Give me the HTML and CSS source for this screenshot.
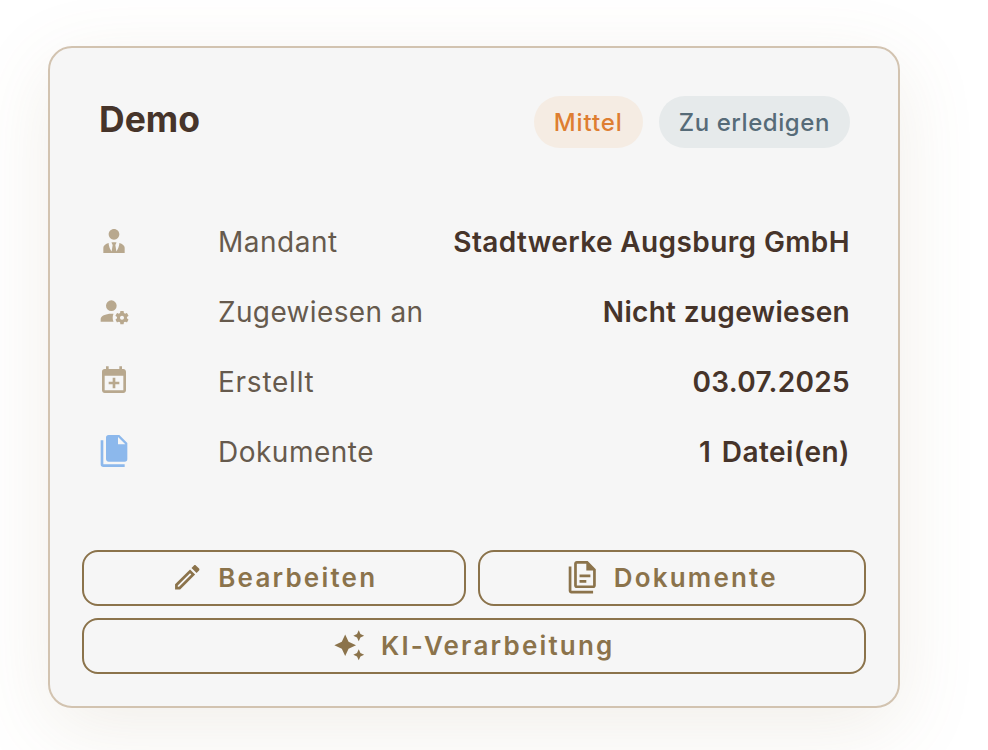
FILE: index.html
```html
<!DOCTYPE html>
<html lang="de">
<head>
<meta charset="utf-8">
<title>Demo</title>
<link rel="stylesheet" href="styles.css">
</head>
<body>
<article class="card">
  <header class="card-header">
    <h2 class="title">Demo</h2>
    <div class="chips">
      <span class="chip chip-priority">Mittel</span>
      <span class="chip chip-status">Zu erledigen</span>
    </div>
  </header>
  <div class="details">
    <div class="row">
      <svg class="icon" viewBox="0 0 24 24"><path d="M12 3C14.21 3 16 4.79 16 7S14.21 11 12 11 8 9.21 8 7 9.79 3 12 3M16 13.54C16 14.6 15.72 17.07 13.81 19.83L13 15L13.94 13.12C13.32 13.05 12.67 13 12 13S10.68 13.05 10.06 13.12L11 15L10.19 19.83C8.28 17.07 8 14.6 8 13.54C5.61 14.24 4 15.5 4 17V21H20V17C20 15.5 18.4 14.24 16 13.54Z"/></svg>
      <span class="label">Mandant</span><span class="value client">Stadtwerke Augsburg GmbH</span>
    </div>
    <div class="row">
      <svg class="icon" viewBox="0 0 24 24"><path d="M10 4A4 4 0 0 0 6 8A4 4 0 0 0 10 12A4 4 0 0 0 14 8A4 4 0 0 0 10 4M17 12C16.87 12 16.76 12.09 16.74 12.21L16.55 13.53C16.25 13.66 15.96 13.82 15.7 14L14.46 13.5C14.35 13.5 14.22 13.5 14.15 13.63L13.15 15.36C13.09 15.47 13.11 15.6 13.21 15.68L14.27 16.5C14.25 16.67 14.24 16.83 14.24 17C14.24 17.17 14.25 17.33 14.27 17.5L13.21 18.32C13.12 18.4 13.09 18.53 13.15 18.64L14.15 20.37C14.21 20.5 14.34 20.5 14.46 20.5L15.7 20C15.96 20.18 16.24 20.35 16.55 20.47L16.74 21.79C16.76 21.91 16.86 22 17 22H19C19.11 22 19.22 21.91 19.24 21.79L19.43 20.47C19.73 20.34 20 20.18 20.27 20L21.5 20.5C21.63 20.5 21.76 20.5 21.83 20.37L22.83 18.64C22.89 18.53 22.86 18.4 22.77 18.32L21.7 17.5C21.72 17.33 21.74 17.17 21.74 17C21.74 16.83 21.73 16.67 21.7 16.5L22.76 15.68C22.85 15.6 22.88 15.47 22.82 15.36L21.82 13.63C21.76 13.5 21.63 13.5 21.5 13.5L20.27 14C20 13.82 19.73 13.65 19.42 13.53L19.23 12.21C19.22 12.09 19.11 12 19 12H17M10 14C5.58 14 2 15.79 2 18V20H11.68A7 7 0 0 1 11 17A7 7 0 0 1 11.64 14.09C11.11 14.03 10.56 14 10 14M18 15.5C18.83 15.5 19.5 16.17 19.5 17C19.5 17.83 18.83 18.5 18 18.5C17.16 18.5 16.5 17.83 16.5 17C16.5 16.17 17.17 15.5 18 15.5Z"/></svg>
      <span class="label assigned">Zugewiesen an</span><span class="value">Nicht zugewiesen</span>
    </div>
    <div class="row">
      <svg class="icon" viewBox="0 0 24 24"><path d="M19 19V8H5V19H19M16 1H18V3H19C20.11 3 21 3.9 21 5V19C21 20.11 20.11 21 19 21H5C3.89 21 3 20.1 3 19V5C3 3.89 3.89 3 5 3H6V1H8V3H16V1M11 9.5H13V12.5H16V14.5H13V17.5H11V14.5H8V12.5H11V9.5Z"/></svg>
      <span class="label created">Erstellt</span><span class="value">03.07.2025</span>
    </div>
    <div class="row">
      <svg class="icon icon-files" viewBox="0 0 24 24"><path d="M15,7H20.5L15,1.5V7M8,0H16L22,6V18A2,2 0 0,1 20,20H8C6.89,20 6,19.1 6,18V2A2,2 0 0,1 8,0M4,4V22H20V24H4A2,2 0 0,1 2,22V4H4Z"/></svg>
      <span class="label">Dokumente</span><span class="value count">1 Datei(en)</span>
    </div>
  </div>
  <div class="actions">
    <button class="btn"><svg viewBox="0 0 24 24"><path d="M14.06,9L15,9.94L5.92,19H5V18.08L14.06,9M17.66,3C17.41,3 17.15,3.1 16.96,3.29L15.13,5.12L18.88,8.87L20.71,7.04C21.1,6.65 21.1,6 20.71,5.63L18.37,3.29C18.17,3.09 17.92,3 17.66,3M14.06,6.19L3,17.25V21H6.75L17.81,9.94L14.06,6.19Z"/></svg><span>Bearbeiten</span></button>
    <button class="btn"><svg viewBox="0 0 24 24"><path d="M16 0H8C6.9 0 6 .9 6 2V18C6 19.1 6.9 20 8 20H20C21.1 20 22 19.1 22 18V6L16 0M20 18H8V2H15V7H20V18M4 4V22H20V24H4C2.9 24 2 23.1 2 22V4H4M10 10V12H18V10H10M10 14V16H15V14H10Z"/></svg><span>Dokumente</span></button>
    <button class="btn btn-wide"><svg viewBox="0 0 24 24"><path d="M19,1L17.74,3.75L15,5L17.74,6.26L19,9L20.25,6.26L23,5L20.25,3.75M9,4L6.5,9.5L1,12L6.5,14.5L9,20L11.5,14.5L17,12L11.5,9.5M19,15L17.74,17.74L15,19L17.74,20.25L19,23L20.25,20.25L23,19L20.25,17.74"/></svg><span>KI-Verarbeitung</span></button>
  </div>
</article>
</body>
</html>
```
FILE: styles.css
```css
* { box-sizing: border-box; }
body {
  margin: 0;
  padding: 46px 88px 0 48px;
  height: 750px;
  overflow: hidden;
  background: #fff;
  font-family: Inter, sans-serif;
}
.card {
  height: 662px;
  padding: 48px 32px 32px;
  display: flex;
  flex-direction: column;
  background: #f6f6f6;
  border: 2px solid #d2c3b0;
  border-radius: 24px;
  box-shadow: 0 20px 80px rgba(139, 115, 75, 0.12);
}
.card-header {
  display: flex;
  justify-content: space-between;
  padding: 0 16px;
}
.title {
  margin: 0;
  padding-left: 1px;
  font-size: 35.5px;
  line-height: 47px;
  font-weight: 700;
  color: #46342a;
}
.chips { display: flex; gap: 16px; }
.chip {
  height: 52px;
  padding: 0 20px;
  border-radius: 26px;
  font-size: 24px;
  line-height: 53px;
  font-weight: 500;
}
.chip-priority { background: #f5ece3; color: #de7e31; letter-spacing: 0.9px; }
.chip-status { background: #e6eaeb; color: #566b78; letter-spacing: 0.57px; }
.details { margin-top: 59px; padding: 0 16px; }
.row {
  display: grid;
  grid-template-columns: 120px auto 1fr;
  align-items: center;
  height: 70px;
  font-size: 28px;
  letter-spacing: 0.5px;
}
.icon {
  width: 32px;
  height: 32px;
  margin-top: -3px;
  fill: #b8a88e;
}
.icon-files { fill: #8cb8ec; }
.label { color: #665a4d; }
.label.assigned { letter-spacing: 0.35px; }
.label.created { letter-spacing: 0.75px; }
.value { text-align: right; font-weight: 600; color: #46342a; letter-spacing: 0.32px; }
.value.client { letter-spacing: 0.39px; }
.value.count { letter-spacing: 0.45px; word-spacing: 3px; }
.actions {
  margin-top: auto;
  display: grid;
  grid-template-columns: 384px 388px;
  gap: 12px;
}
.btn {
  display: flex;
  align-items: center;
  justify-content: center;
  gap: 15px;
  height: 56px;
  padding: 0 0 1px;
  border: 2px solid #8b734b;
  border-radius: 16px;
  background: transparent;
  color: #8b734b;
  font: 600 26px Inter, sans-serif;
  letter-spacing: 2.2px;
}
.btn svg { width: 32.5px; height: 32.5px; fill: currentColor; }
.btn-wide { grid-column: 1 / -1; }
```
